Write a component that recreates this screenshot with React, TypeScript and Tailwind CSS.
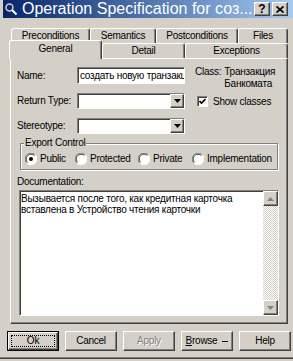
import React from "react";

const raised =
  "border border-t-white border-l-white border-r-[#404040] border-b-[#404040] shadow-[inset_-1px_-1px_0_#808080]";
const sunken =
  "border border-t-[#808080] border-l-[#808080] border-r-white border-b-white shadow-[inset_1px_1px_0_#404040]";

function DownArrow({ color = "#000" }: { color?: string }) {
  return (
    <svg width="7" height="4" viewBox="0 0 7 4">
      <polygon points="0,0 7,0 3.5,4" fill={color} />
    </svg>
  );
}
function UpArrow({ color = "#000" }: { color?: string }) {
  return (
    <svg width="7" height="4" viewBox="0 0 7 4">
      <polygon points="0,4 7,4 3.5,0" fill={color} />
    </svg>
  );
}

function Combo() {
  return (
    <div className={`flex h-[16px] w-[108px] bg-white ${sunken}`}>
      <div className="flex-1" />
      <div className={`flex h-full w-[14px] items-center justify-center bg-[#d4d0c8] ${raised}`}>
        <DownArrow />
      </div>
    </div>
  );
}

function Radio({ checked }: { checked?: boolean }) {
  return (
    <svg width="12" height="12" viewBox="0 0 12 12" className="shrink-0">
      <circle cx="6" cy="6" r="5.5" fill="#fff" />
      <path d="M1.8 10.2 A5.5 5.5 0 0 1 10.2 1.8" stroke="#808080" fill="none" />
      <path d="M10.2 1.8 A5.5 5.5 0 0 1 1.8 10.2" stroke="#ffffff" fill="none" />
      <path d="M2.6 9.4 A4.5 4.5 0 0 1 9.4 2.6" stroke="#404040" fill="none" />
      {checked && <circle cx="6" cy="6" r="2" fill="#000" />}
    </svg>
  );
}

function Tab({ label, className }: { label: string; className: string }) {
  return (
    <div
      className={`flex items-center justify-center rounded-t-[3px] border-l border-t border-r border-l-white border-t-white border-r-[#404040] bg-[#d4d0c8] shadow-[inset_-1px_0_0_#808080] ${className}`}
    >
      {label}
    </div>
  );
}

function Btn({
  children,
  className = "",
}: {
  children: React.ReactNode;
  className?: string;
}) {
  return (
    <div
      className={`flex h-[20px] w-[52px] items-center justify-center ${raised} ${className}`}
    >
      {children}
    </div>
  );
}

export default function App() {
  return (
    <div className="flex h-[361px] w-[293px] flex-col overflow-hidden bg-[#d4d0c8] font-['Liberation_Sans',Arial,sans-serif] text-[10px] leading-[12px] tracking-[-0.25px] text-black">
      {/* Title bar */}
      <div className="ml-[3px] flex h-[18px] shrink-0 items-center bg-linear-to-r from-[#0a246a] to-[#a6caf0] pl-[1px] pr-[5px] tracking-normal">
        <svg width="14" height="14" viewBox="0 0 14 14" className="shrink-0">
          <circle cx="5.5" cy="5.5" r="3.5" fill="none" stroke="#d4d0c8" strokeWidth="1.5" />
          <line x1="8" y1="8" x2="12.5" y2="12.5" stroke="#ffffff" strokeWidth="2" />
        </svg>
        <span className="ml-[4px] flex-1 whitespace-nowrap text-[16px] leading-[18px] text-white">
          Operation Specification for соз...
        </span>
        <div className={`flex h-[14px] w-[16px] items-center justify-center bg-[#d4d0c8] text-[12px] font-bold leading-none ${raised}`}>
          ?
        </div>
        <div className={`ml-[2px] flex h-[14px] w-[16px] items-center justify-center bg-[#d4d0c8] ${raised}`}>
          <svg width="8" height="7" viewBox="0 0 8 7">
            <path d="M0.5 0.5 L7.5 6.5 M7.5 0.5 L0.5 6.5" stroke="#000" strokeWidth="1.8" />
          </svg>
        </div>
      </div>

      {/* Tabs row 1 */}
      <div className="ml-[11px] mt-[10px] flex h-[15px] shrink-0">
        <Tab label="Preconditions" className="h-[15px] w-[79px]" />
        <Tab label="Semantics" className="h-[15px] w-[66px]" />
        <Tab label="Postconditions" className="h-[15px] w-[82px]" />
        <Tab label="Files" className="h-[15px] w-[50px]" />
      </div>
      {/* Tabs row 2 */}
      <div className="relative z-10 -mt-[3px] ml-[9px] flex h-[18px] shrink-0 items-end">
        <Tab label="General" className="-mb-[1px] h-[19px] w-[93px] pb-[2px]" />
        <Tab label="Detail" className="h-[15px] w-[83px]" />
        <Tab label="Exceptions" className="h-[15px] w-[103px]" />
      </div>

      {/* Panel */}
      <div className={`ml-[10px] flex h-[266px] w-[278px] shrink-0 flex-col ${raised}`}>
        <div className="flex">
          <div className="flex flex-col pl-[6px] pt-[8px]">
            <div className="flex h-[17px] items-center">
              <span className="w-[60px]">Name:</span>
              <div className={`flex h-[17px] w-[108px] items-center overflow-hidden whitespace-nowrap bg-white pl-[2px] ${sunken}`}>
                создать новую транзакцию
              </div>
            </div>
            <div className="mt-[9px] flex h-[16px] items-center">
              <span className="w-[60px]">Return Type:</span>
              <Combo />
            </div>
            <div className="mt-[9px] flex h-[16px] items-center">
              <span className="w-[60px]">Stereotype:</span>
              <Combo />
            </div>
          </div>
          <div className="ml-[10px] flex flex-col pt-[7px]">
            <div className="flex">
              <span>Class:</span>
              <div className="ml-[3px] flex flex-col">
                <span>Транзакция</span>
                <span>Банкомата</span>
              </div>
            </div>
            <div className="ml-[2px] mt-[5px] flex h-[13px] items-center gap-[5px]">
              <div className={`flex h-[11px] w-[11px] items-center justify-center bg-white ${sunken}`}>
                <svg width="7" height="7" viewBox="0 0 7 7">
                  <path d="M0.5 3 L2.5 5 L6.5 1" stroke="#000" strokeWidth="1.6" fill="none" />
                </svg>
              </div>
              <span>Show classes</span>
            </div>
          </div>
        </div>

        {/* Export Control group */}
        <div className="relative ml-[9px] mt-[9px] h-[27px] w-[258px] border border-[#808080] shadow-[inset_1px_1px_0_#fff,1px_1px_0_#fff]">
          <span className="absolute -top-[7px] left-[3px] bg-[#d4d0c8] px-[1px]">
            Export Control
          </span>
          <div className="flex h-full items-center pl-[4px] pt-[5px]">
            <div className="flex w-[50px] items-center gap-[3px]">
              <Radio checked />
              <span>Public</span>
            </div>
            <div className="flex w-[63px] items-center gap-[3px]">
              <Radio />
              <span>Protected</span>
            </div>
            <div className="flex w-[54px] items-center gap-[3px]">
              <Radio />
              <span>Private</span>
            </div>
            <div className="flex items-center gap-[3px]">
              <Radio />
              <span>Implementation</span>
            </div>
          </div>
        </div>

        <div className="ml-[6px] mt-[6px]">Documentation:</div>
        <div className={`ml-[8px] mt-[2px] flex h-[126px] w-[260px] bg-white ${sunken}`}>
          <div className="flex-1 pl-[1px] pt-[2px] leading-[11px]">
            Вызывается после того, как кредитная карточка
            <br />
            вставлена в Устройство чтения карточки
          </div>
          <div className="flex w-[15px] flex-col">
            <div className={`flex h-[15px] items-center justify-center bg-[#d4d0c8] ${raised}`}>
              <UpArrow color="#808080" />
            </div>
            <div className="flex-1 bg-[repeating-conic-gradient(#d4d0c8_0%_25%,#ffffff_0%_50%)] bg-[length:2px_2px]" />
            <div className={`flex h-[15px] items-center justify-center bg-[#d4d0c8] ${raised}`}>
              <DownArrow color="#808080" />
            </div>
          </div>
        </div>
      </div>

      {/* Buttons */}
      <div className="ml-[7px] mt-[7px] flex shrink-0 gap-[6px]">
        <div className="flex h-[20px] w-[52px] border border-black">
          <div className="flex flex-1 border border-t-white border-l-white border-r-[#404040] border-b-[#404040] shadow-[inset_-1px_-1px_0_#808080] p-[2px]">
            <div className="flex flex-1 items-center justify-center border border-dotted border-black">
              Ok
            </div>
          </div>
        </div>
        <Btn>Cancel</Btn>
        <Btn className="text-[#808080] [text-shadow:1px_1px_0_#fff]">Apply</Btn>
        <Btn>
          <span>
            <span className="underline">B</span>rowse
          </span>
          <span className="ml-[5px] inline-block h-[1px] w-[6px] bg-black" />
        </Btn>
        <Btn>Help</Btn>
      </div>

      <div className="flex-1" />
      <div className="h-[1px] shrink-0 bg-[#808080]" />
      <div className="h-[1px] shrink-0 bg-[#404040]" />
      <div className="h-[2px] shrink-0 bg-[#d4d0c8]" />
    </div>
  );
}
